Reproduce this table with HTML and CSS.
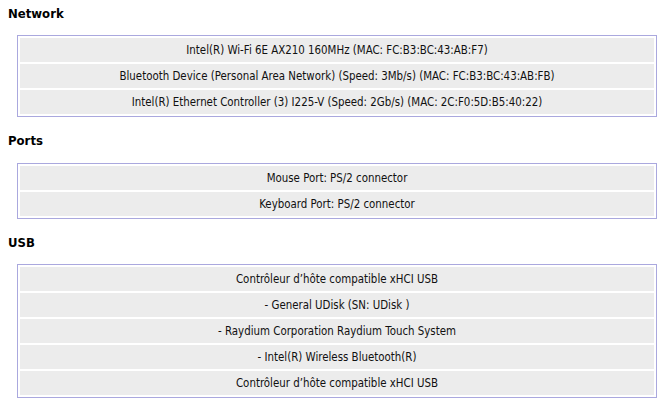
FILE: index.html
```html
<!DOCTYPE html>
<html>
<head>
<meta charset="utf-8">
<link rel="stylesheet" href="styles.css">
</head>
<body>
<section class="section">
  <h2 class="title">Network</h2>
  <div class="box">
    <div class="row">Intel(R) Wi-Fi 6E AX210 160MHz (MAC: FC:B3:BC:43:AB:F7)</div>
    <div class="row">Bluetooth Device (Personal Area Network) (Speed: 3Mb/s) (MAC: FC:B3:BC:43:AB:FB)</div>
    <div class="row">Intel(R) Ethernet Controller (3) I225-V (Speed: 2Gb/s) (MAC: 2C:F0:5D:B5:40:22)</div>
  </div>
</section>
<section class="section">
  <h2 class="title">Ports</h2>
  <div class="box">
    <div class="row">Mouse Port: PS/2 connector</div>
    <div class="row">Keyboard Port: PS/2 connector</div>
  </div>
</section>
<section class="section">
  <h2 class="title">USB</h2>
  <div class="box">
    <div class="row">Contrôleur d’hôte compatible xHCI USB</div>
    <div class="row">- General UDisk (SN: UDisk )</div>
    <div class="row">- Raydium Corporation Raydium Touch System</div>
    <div class="row">- Intel(R) Wireless Bluetooth(R)</div>
    <div class="row">Contrôleur d’hôte compatible xHCI USB</div>
  </div>
</section>
</body>
</html>
```
FILE: styles.css
```css
html, body {
  margin: 0;
  background: #ffffff;
}
body {
  padding: 3.5px 8px 0 8px;
  font-family: "DejaVu Sans Condensed", "DejaVu Sans", sans-serif;
  color: #000;
}
.section + .section {
  margin-top: 14px;
}
.title {
  margin: 0 0 12px 0;
  font-size: 13px;
  line-height: 19.5px;
  font-weight: bold;
  color: #000;
}
.box {
  margin-left: 9px;
  width: 634px;
  border: 1px solid #aaa8de;
  padding: 2px;
  display: flex;
  flex-direction: column;
  gap: 2px;
}
.row {
  height: 24px;
  background: #ececec;
  display: flex;
  align-items: center;
  justify-content: center;
  font-size: 11.4px;
  color: #111;
}
```
